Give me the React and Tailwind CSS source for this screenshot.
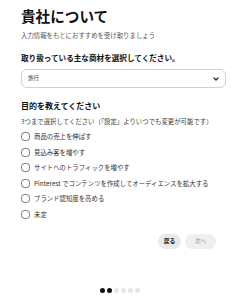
import React, { useState } from 'react';

const goals = [
  '商品の売上を伸ばす',
  '見込み客を増やす',
  'サイトへのトラフィックを増やす',
  'Pinterest でコンテンツを作成してオーディエンスを拡大する',
  'ブランド認知度を高める',
  '未定',
];

const font = { fontFamily: '"Noto Sans CJK JP", "Noto Sans", sans-serif' };

const App = () => {
  const [checked, setChecked] = useState([]);

  const toggle = (i) => {
    setChecked((prev) => (prev.includes(i) ? prev.filter((x) => x !== i) : [...prev, i]));
  };

  return (
    <div className="w-[237px] h-[300px] bg-white text-[#111] flex flex-col px-[21px]" style={font}>
      <h1 className="mt-[7px] text-[14.6px] leading-[18px] font-bold">貴社について</h1>
      <p className="mt-[6px] text-[6.4px] leading-[9px] text-[#555]">入力情報をもとにおすすめを受け取りましょう</p>

      <h2 className="mt-[12px] text-[7.6px] leading-[11px] font-bold">取り扱っている主な商材を選択してください。</h2>
      <div className="mt-[6px] h-[19px] w-[205px] rounded-[6px] border border-[#d0d0d0] flex items-center justify-between pl-[6px] pr-[6px]">
        <span className="text-[5.5px] text-[#333]">旅行</span>
        <svg width="6" height="4" viewBox="0 0 6 4">
          <path d="M1 1l2 2 2-2" fill="none" stroke="#222" strokeWidth="1.2" strokeLinecap="round" strokeLinejoin="round" />
        </svg>
      </div>

      <h2 className="mt-[12px] text-[8px] leading-[11px] font-bold">目的を教えてください</h2>
      <p className="mt-[6px] text-[6.4px] leading-[9px] text-[#444] whitespace-nowrap">3つまで選択してください（「設定」よりいつでも変更が可能です）</p>

      <div className="mt-[6px] flex flex-col gap-[6.6px]">
        {goals.map((g, i) => (
          <label key={g} className="flex items-center gap-[4px] h-[9px] cursor-pointer" onClick={() => toggle(i)}>
            <span
              className={
                'w-[9px] h-[9px] rounded-[3.5px] border-[1.3px] border-[#767676] ' +
                (checked.includes(i) ? 'bg-black' : 'bg-white')
              }
            />
            <span className="text-[6.4px] leading-[9px] text-[#333] whitespace-nowrap">{g}</span>
          </label>
        ))}
      </div>

      <div className="mt-[15px] flex justify-end gap-[4px]">
        <button className="h-[15px] w-[23px] rounded-full bg-[#e9e9e9] text-[5.8px] font-bold text-[#111]">戻る</button>
        <button className="h-[15px] w-[31px] rounded-full bg-[#efefef] text-[5.8px] text-[#999]">次へ</button>
      </div>

      <div className="mt-auto mb-[7px] flex justify-center gap-[2px] pl-[3px]">
        {[0, 1, 2, 3, 4, 5].map((d) => (
          <span key={d} className={'w-[5px] h-[5px] rounded-full ' + (d < 2 ? 'bg-[#111]' : 'bg-[#e6e6e6]')} />
        ))}
      </div>
    </div>
  );
};

export default App;
